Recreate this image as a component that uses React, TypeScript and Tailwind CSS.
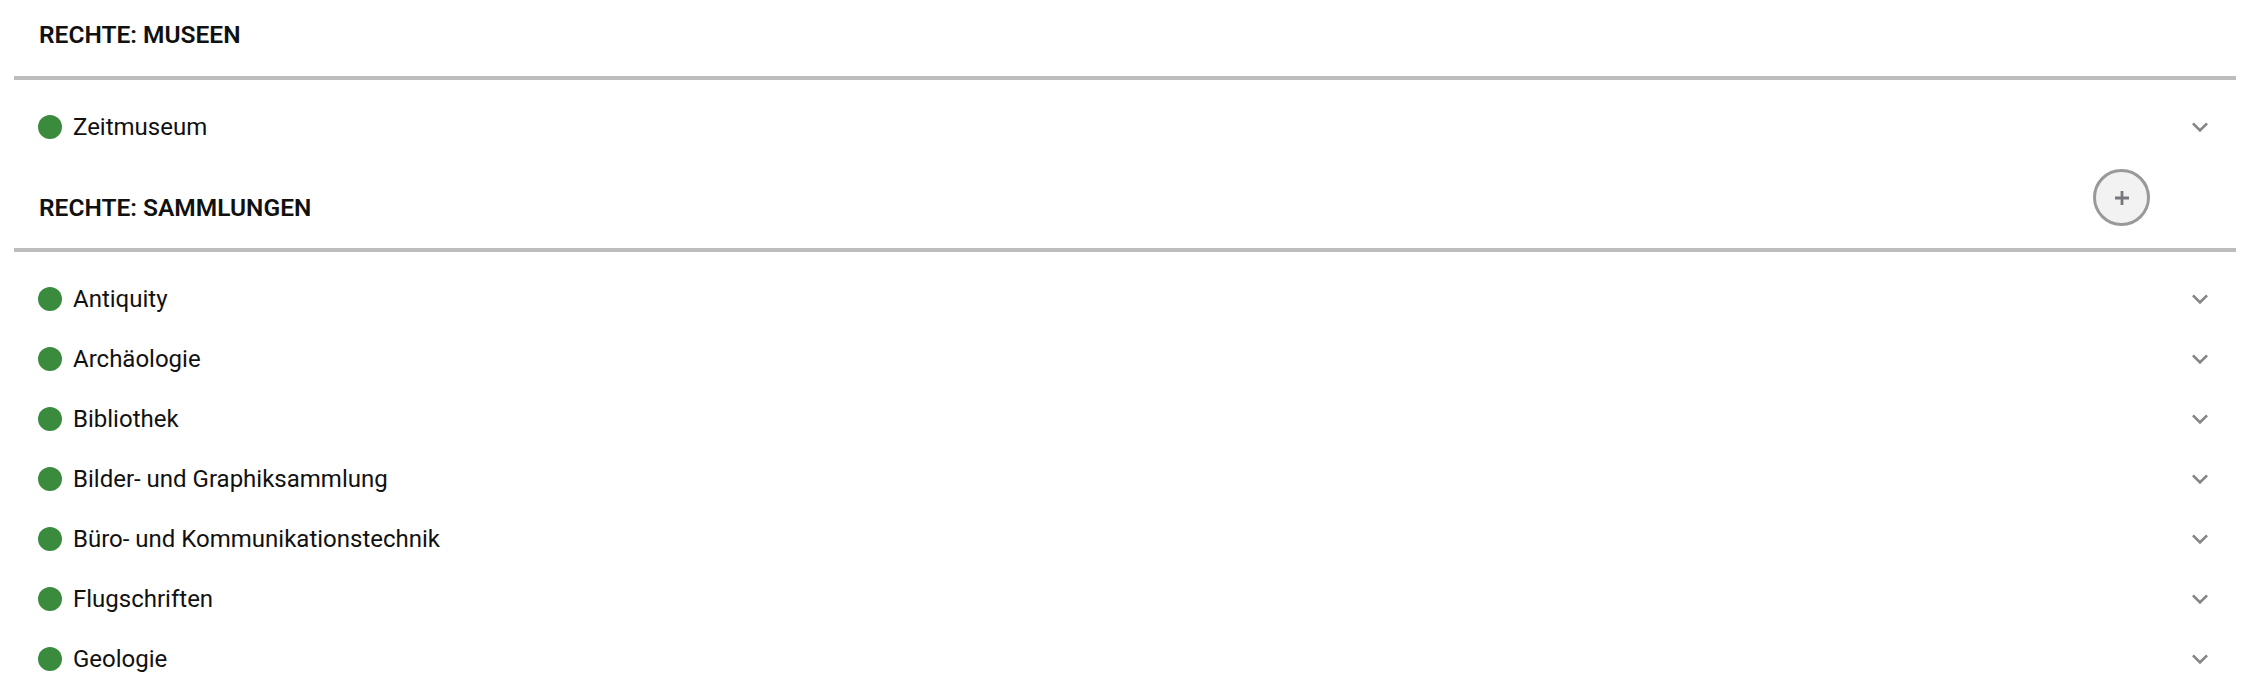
import React from "react";

const museen = ["Zeitmuseum"];
const sammlungen = [
  "Antiquity",
  "Archäologie",
  "Bibliothek",
  "Bilder- und Graphiksammlung",
  "Büro- und Kommunikationstechnik",
  "Flugschriften",
  "Geologie",
];

function Chevron() {
  return (
    <svg width="32" height="32" viewBox="0 0 24 24" className="shrink-0">
      <path d="M16.59 8.59L12 13.17 7.41 8.59 6 10l6 6 6-6z" fill="#858585" />
    </svg>
  );
}

function Row({ label }: { label: string }) {
  return (
    <div className="h-[60px] flex items-center pl-[38px] pr-[31px]">
      <span className="w-[24px] h-[24px] rounded-full bg-[#3b8b3f] shrink-0" />
      <span className="ml-[11px] flex-1 text-[24px] leading-[33px] text-[#111111]">{label}</span>
      <Chevron />
    </div>
  );
}

export default function App() {
  return (
    <div className="w-[2247px] h-[686px] overflow-hidden bg-white font-['Roboto',sans-serif]">
      <div className="h-[76px] pl-[39px] pt-[18px]">
        <h2 className="text-[24.5px] leading-[33px] font-semibold text-[#111111]">RECHTE: MUSEEN</h2>
      </div>
      <div className="h-[4px] bg-[#bdbdbd] ml-[14px] mr-[11px]" />
      <div className="pt-[17px]">
        {museen.map((m) => (
          <Row key={m} label={m} />
        ))}
      </div>
      <div className="h-[91px] flex items-start justify-between pl-[39px] pr-[97px] pt-[12px]">
        <h2 className="mt-[22px] text-[24.5px] leading-[33px] font-semibold text-[#111111]">RECHTE: SAMMLUNGEN</h2>
        <button className="w-[57px] h-[57px] rounded-full border-[3px] border-[#999999] bg-[#f2f2f2] flex items-center justify-center">
          <svg width="16" height="16" viewBox="0 0 16 16">
            <path d="M8 1v14M1 8h14" stroke="#77777e" strokeWidth="2.8" />
          </svg>
        </button>
      </div>
      <div className="h-[4px] bg-[#bdbdbd] ml-[14px] mr-[11px]" />
      <div className="pt-[17px]">
        {sammlungen.map((m) => (
          <Row key={m} label={m} />
        ))}
      </div>
    </div>
  );
}
